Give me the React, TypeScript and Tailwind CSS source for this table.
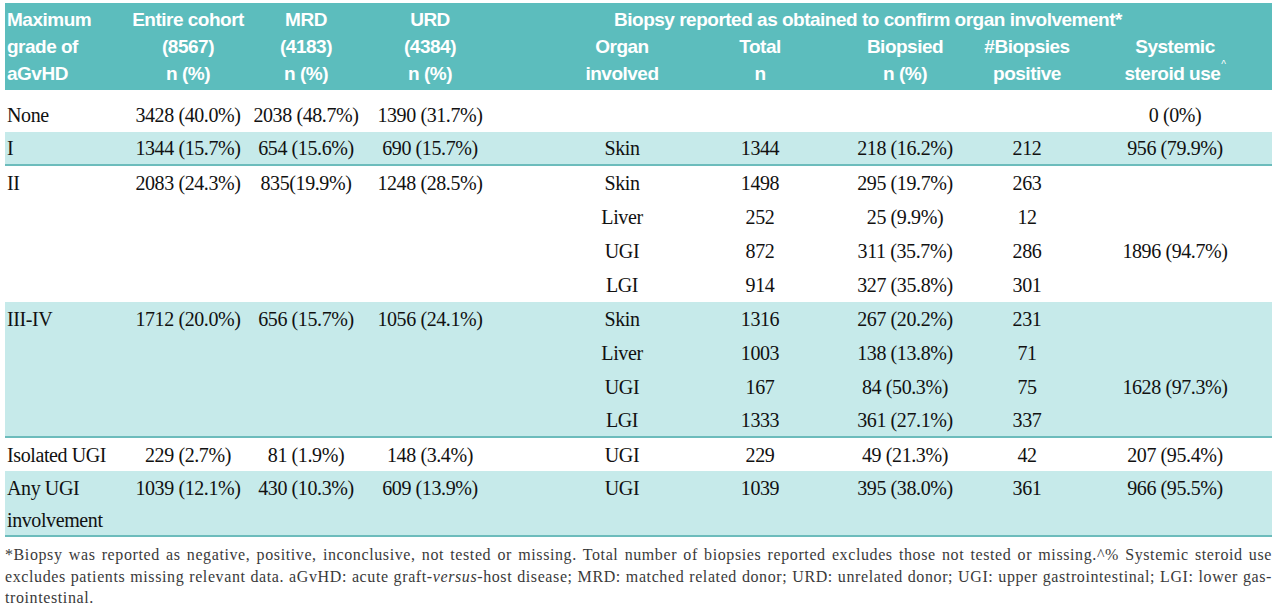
import React from 'react';

const cols = 'grid grid-cols-[123px_120px_116px_132px_62px_128px_148px_142px_102px_194px]';

const headFont = {
  fontFamily: '"Liberation Sans", Arial, sans-serif',
};

type Group = {
  rows: string[][];
  shaded: boolean;
  rule: boolean;
  tight?: boolean;
};

const groups: Group[] = [
  {
    shaded: false,
    rule: false,
    rows: [['None', '3428 (40.0%)', '2038 (48.7%)', '1390 (31.7%)', '', '', '', '', '', '0 (0%)']],
  },
  {
    shaded: true,
    rule: true,
    rows: [['I', '1344 (15.7%)', '654 (15.6%)', '690 (15.7%)', '', 'Skin', '1344', '218 (16.2%)', '212', '956 (79.9%)']],
  },
  {
    shaded: false,
    rule: false,
    rows: [
      ['II', '2083 (24.3%)', '835(19.9%)', '1248 (28.5%)', '', 'Skin', '1498', '295 (19.7%)', '263', ''],
      ['', '', '', '', '', 'Liver', '252', '25 (9.9%)', '12', ''],
      ['', '', '', '', '', 'UGI', '872', '311 (35.7%)', '286', '1896 (94.7%)'],
      ['', '', '', '', '', 'LGI', '914', '327 (35.8%)', '301', ''],
    ],
  },
  {
    shaded: true,
    rule: true,
    rows: [
      ['III-IV', '1712 (20.0%)', '656 (15.7%)', '1056 (24.1%)', '', 'Skin', '1316', '267 (20.2%)', '231', ''],
      ['', '', '', '', '', 'Liver', '1003', '138 (13.8%)', '71', ''],
      ['', '', '', '', '', 'UGI', '167', '84 (50.3%)', '75', '1628 (97.3%)'],
      ['', '', '', '', '', 'LGI', '1333', '361 (27.1%)', '337', ''],
    ],
  },
  {
    shaded: false,
    rule: false,
    tight: true,
    rows: [['Isolated UGI', '229 (2.7%)', '81 (1.9%)', '148 (3.4%)', '', 'UGI', '229', '49 (21.3%)', '42', '207 (95.4%)']],
  },
  {
    shaded: true,
    rule: true,
    tight: true,
    rows: [
      ['Any UGI', '1039 (12.1%)', '430 (10.3%)', '609 (13.9%)', '', 'UGI', '1039', '395 (38.0%)', '361', '966 (95.5%)'],
      ['involvement', '', '', '', '', '', '', '', '', ''],
    ],
  },
];

function HeaderRow({ cells }: { cells: React.ReactNode[] }) {
  return (
    <div className={`${cols} h-[27px] items-center leading-[27px]`}>
      {cells.map((c, i) => (
        <div key={i} className={i === 0 ? 'pl-[2px] text-left whitespace-nowrap' : 'text-center whitespace-nowrap'}>
          {c}
        </div>
      ))}
    </div>
  );
}

function rowHeight(g: Group, ri: number) {
  const last = g.rule && ri === g.rows.length - 1;
  if (g.tight) return last ? 'h-[31px]' : 'h-[33px]';
  return last ? 'h-[32px]' : 'h-[34px]';
}

export default function App() {
  return (
    <div className="w-[1280px] h-[608px] bg-white pt-[3px] px-[5px] overflow-hidden">
      <div className="w-[1267px]">
        <div
          className="bg-[#5cbdbd] text-white font-bold text-[19px] pt-[3px] pb-[3px] tracking-[-0.5px]"
          style={headFont}
        >
          <div className={`${cols} h-[27px] items-center leading-[27px]`}>
            <div className="pl-[2px] whitespace-nowrap">Maximum</div>
            <div className="text-center whitespace-nowrap">Entire cohort</div>
            <div className="text-center">MRD</div>
            <div className="text-center">URD</div>
            <div />
            <div className="col-span-5 text-center pr-[94px] whitespace-nowrap">
              Biopsy reported as obtained to confirm organ involvement*
            </div>
          </div>
          <HeaderRow
            cells={['grade of', '(8567)', '(4183)', '(4384)', '', 'Organ', 'Total', 'Biopsied', '#Biopsies', 'Systemic']}
          />
          <HeaderRow
            cells={[
              'aGvHD',
              'n (%)',
              'n (%)',
              'n (%)',
              '',
              'involved',
              'n',
              'n (%)',
              'positive',
              <span key="s">
                steroid use<sup className="text-[10px] font-normal align-[7px] ml-[1px]">^</sup>
              </span>,
            ]}
          />
        </div>

        <div
          className="mt-[8px] text-[20px] text-[#111] tracking-[-0.4px]"
          style={{ fontFamily: '"Liberation Serif", "DejaVu Serif", serif' }}
        >
          {groups.map((g, gi) => (
            <div
              key={gi}
              className={`${g.shaded ? 'bg-[#c6eaea]' : 'bg-white'} ${g.rule ? 'border-b-2 border-[#6cbcbc]' : ''}`}
            >
              {g.rows.map((r, ri) => (
                <div key={ri} className={`${cols} ${rowHeight(g, ri)} items-center`}>
                  {r.map((c, ci) => (
                    <div
                      key={ci}
                      className={ci === 0 ? 'pl-[2px] text-left whitespace-nowrap' : 'text-center whitespace-nowrap'}
                    >
                      {c}
                    </div>
                  ))}
                </div>
              ))}
            </div>
          ))}
        </div>

        <div
          className="mt-[7px] text-[16px] leading-[21.5px] text-[#3a3a3a] tracking-[0.6px]"
          style={{ fontFamily: '"Liberation Serif", "DejaVu Serif", serif' }}
        >
          <div className="text-justify [text-align-last:justify]">
            *Biopsy was reported as negative, positive, inconclusive, not tested or missing. Total number of biopsies
            reported excludes those not tested or missing.^% Systemic steroid use
          </div>
          <div className="text-justify [text-align-last:justify]">
            excludes patients missing relevant data. aGvHD: acute graft-<i>versus</i>-host disease; MRD: matched related
            donor; URD: unrelated donor; UGI: upper gastrointestinal; LGI: lower gas-
          </div>
          <div>trointestinal.</div>
        </div>
      </div>
    </div>
  );
}
